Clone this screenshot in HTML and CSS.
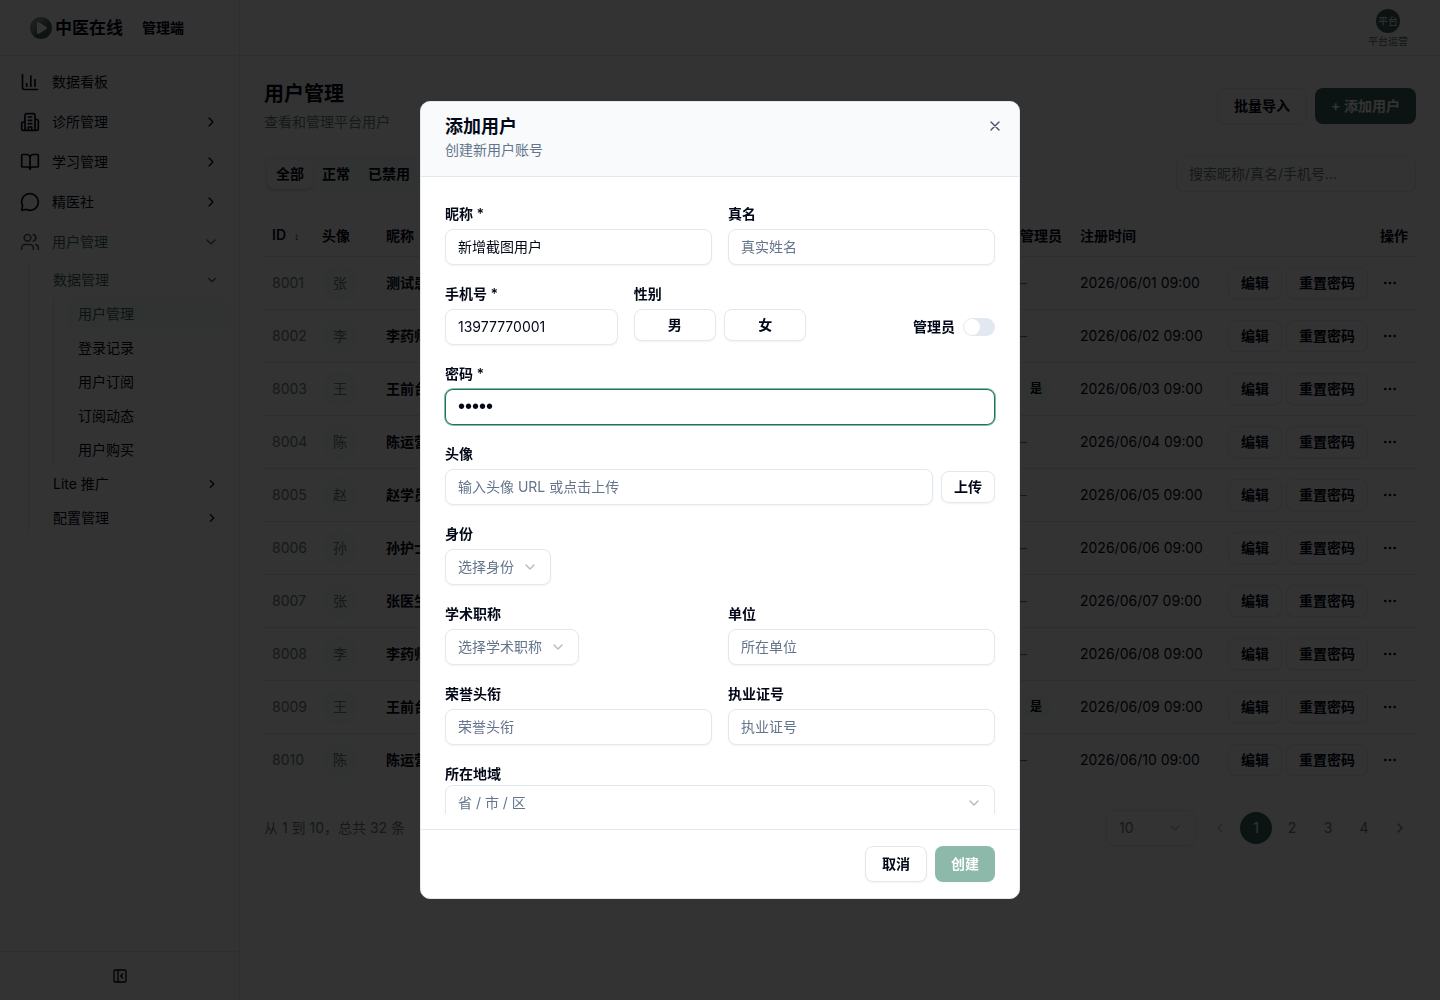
FILE: index.html
```html
<!DOCTYPE html>
<html lang="zh-CN">
<head>
    <meta charset="UTF-8">
    <meta name="viewport" content="width=device-width, initial-scale=1.0">
    <title>用户管理 - 中医在线</title>
    <link rel="stylesheet" href="styles.css">
</head>
<body>
    <div class="app">
        <aside class="sidebar">
            <div class="brand">
                <svg class="brand-logo" viewBox="0 0 24 24" width="24" height="24">
                    <defs>
                        <linearGradient id="logo" x1="0" y1="0" x2="1" y2="1">
                            <stop offset="0.3" stop-color="#8c9692"/>
                            <stop offset="0.6" stop-color="#41695f"/>
                        </linearGradient>
                    </defs>
                    <circle cx="12" cy="12" r="11" fill="url(#logo)"/>
                    <path d="M8 7.200c0-1 1-1.500 1.800-1l7.600 4.700c.8.500.8 1.600 0 2.100l-7.600 4.700c-.8.500-1.800 0-1.800-1z" fill="#fff"/>
                </svg>
                <span class="brand-name">中医在线</span>
                <span class="brand-sub">管理端</span>
            </div>
            <nav class="nav">
                <a class="nav-item" href="#">
                    <svg class="icon" viewBox="0 0 24 24"><path d="M3 3v16a2 2 0 0 0 2 2h16M18 17V9M13 17V5M8 17v-3"/></svg>
                    <span>数据看板</span>
                </a>
                <a class="nav-item" href="#">
                    <svg class="icon" viewBox="0 0 24 24"><path d="M6 22V4a2 2 0 0 1 2-2h8a2 2 0 0 1 2 2v18zM6 12H4a2 2 0 0 0-2 2v6a2 2 0 0 0 2 2h2M18 9h2a2 2 0 0 1 2 2v9a2 2 0 0 1-2 2h-2M10 6h4M10 10h4M10 14h4M10 22v-4h4v4"/></svg>
                    <span>诊所管理</span>
                    <svg class="arrow" viewBox="0 0 24 24"><path d="m9 18 6-6-6-6"/></svg>
                </a>
                <a class="nav-item" href="#">
                    <svg class="icon" viewBox="0 0 24 24"><path d="M12 7v14M3 18a1 1 0 0 1-1-1V4a1 1 0 0 1 1-1h5a4 4 0 0 1 4 4 4 4 0 0 1 4-4h5a1 1 0 0 1 1 1v13a1 1 0 0 1-1 1h-6a3 3 0 0 0-3 3 3 3 0 0 0-3-3z"/></svg>
                    <span>学习管理</span>
                    <svg class="arrow" viewBox="0 0 24 24"><path d="m9 18 6-6-6-6"/></svg>
                </a>
                <a class="nav-item" href="#">
                    <svg class="icon" viewBox="0 0 24 24"><path d="M2.992 16.342a2 2 0 0 1 .094 1.167l-1.065 3.290a1 1 0 0 0 1.236 1.168l3.413-.998a2 2 0 0 1 1.099.092 10 10 0 1 0-4.777-4.719"/></svg>
                    <span>精医社</span>
                    <svg class="arrow" viewBox="0 0 24 24"><path d="m9 18 6-6-6-6"/></svg>
                </a>
                <a class="nav-item green" href="#">
                    <svg class="icon" viewBox="0 0 24 24"><path d="M16 21v-2a4 4 0 0 0-4-4H6a4 4 0 0 0-4 4v2M16 3.128a4 4 0 0 1 0 7.744M22 21v-2a4 4 0 0 0-3-3.870"/><circle cx="9" cy="7" r="4"/></svg>
                    <span>用户管理</span>
                    <svg class="arrow" viewBox="0 0 24 24"><path d="m6 9 6 6 6-6"/></svg>
                </a>
                <div class="subnav">
                    <a class="sub-item green" href="#">数据管理 <svg class="arrow small" viewBox="0 0 24 24"><path d="m6 9 6 6 6-6"/></svg></a>
                    <div class="subnav level3">
                        <a class="sub-item active" href="#">用户管理</a>
                        <a class="sub-item" href="#">登录记录</a>
                        <a class="sub-item" href="#">用户订阅</a>
                        <a class="sub-item" href="#">订阅动态</a>
                        <a class="sub-item" href="#">用户购买</a>
                    </div>
                    <a class="sub-item" href="#">Lite 推广 <svg class="arrow small" viewBox="0 0 24 24"><path d="m9 18 6-6-6-6"/></svg></a>
                    <a class="sub-item" href="#">配置管理 <svg class="arrow small" viewBox="0 0 24 24"><path d="m9 18 6-6-6-6"/></svg></a>
                </div>
            </nav>
            <div class="sidebar-footer">
                <button class="icon-btn" aria-label="收起侧边栏">
                    <svg viewBox="0 0 24 24" width="16" height="16"><rect x="3" y="3" width="18" height="18" rx="2"/><path d="M9 3v18M16 15l-3-3 3-3"/></svg>
                </button>
            </div>
        </aside>

        <div class="main">
            <header class="topbar">
                <div class="account">
                    <span class="account-avatar">平台</span>
                    <span class="account-name">平台运营</span>
                </div>
            </header>
            <main class="content">
                <div class="page-head">
                    <div>
                        <h1>用户管理</h1>
                        <p>查看和管理平台用户</p>
                    </div>
                    <div class="head-actions">
                        <button class="btn">批量导入</button>
                        <button class="btn add">+ 添加用户</button>
                    </div>
                </div>
                <div class="filters">
                    <div class="tabs">
                        <button class="tab selected">全部</button>
                        <button class="tab">正常</button>
                        <button class="tab">已禁用</button>
                    </div>
                    <input class="input search" type="text" placeholder="搜索昵称/真名/手机号..." aria-label="搜索用户">
                </div>
                <table class="users">
                    <colgroup>
                        <col class="col-id">
                        <col class="col-avatar">
                        <col>
                        <col class="col-admin">
                        <col class="col-date">
                        <col class="col-actions">
                    </colgroup>
                    <thead>
                        <tr>
                            <th>ID<span class="sort">↕</span></th>
                            <th>头像</th>
                            <th>昵称</th>
                            <th>管理员</th>
                            <th>注册时间</th>
                            <th class="right">操作</th>
                        </tr>
                    </thead>
                    <tbody class="js-users"></tbody>
                </table>
                <div class="table-footer">
                    <span>从 1 到 10，总共 32 条</span>
                    <div class="pager">
                        <select class="select page-size" aria-label="每页条数"><option>10</option></select>
                        <button class="page-btn faded" aria-label="上一页"><svg viewBox="0 0 24 24" width="16" height="16"><path d="m15 18-6-6 6-6"/></svg></button>
                        <button class="page-btn current">1</button>
                        <button class="page-btn">2</button>
                        <button class="page-btn">3</button>
                        <button class="page-btn">4</button>
                        <button class="page-btn" aria-label="下一页"><svg viewBox="0 0 24 24" width="16" height="16"><path d="m9 18 6-6-6-6"/></svg></button>
                    </div>
                </div>
            </main>
        </div>
    </div>

    <div class="overlay">
        <form class="modal" role="dialog" aria-modal="true" aria-labelledby="modal-title">
            <div class="modal-head">
                <h2 id="modal-title">添加用户</h2>
                <p>创建新用户账号</p>
                <button type="button" class="icon-btn close" aria-label="关闭">
                    <svg viewBox="0 0 24 24" width="16" height="16"><path d="M18 6 6 18M6 6l12 12"/></svg>
                </button>
            </div>
            <div class="modal-body">
                <div class="row two">
                    <div class="field">
                        <label for="nickname">昵称 *</label>
                        <input class="input" id="nickname" type="text" value="新增截图用户">
                    </div>
                    <div class="field">
                        <label for="realname">真名</label>
                        <input class="input" id="realname" type="text" placeholder="真实姓名">
                    </div>
                </div>
                <div class="row three">
                    <div class="field">
                        <label for="phone">手机号 *</label>
                        <input class="input" id="phone" type="tel" value="13977770001">
                    </div>
                    <div class="field">
                        <span class="label" id="gender">性别</span>
                        <div class="gender" role="group" aria-labelledby="gender">
                            <button type="button" class="btn small">男</button>
                            <button type="button" class="btn small">女</button>
                        </div>
                    </div>
                    <div class="admin">
                        <label for="admin">管理员</label>
                        <input class="switch" id="admin" type="checkbox" role="switch">
                    </div>
                </div>
                <div class="field">
                    <label for="password">密码 *</label>
                    <input class="input password focused" id="password" type="password" value="12345">
                </div>
                <div class="field">
                    <label for="avatar">头像</label>
                    <div class="upload">
                        <input class="input" id="avatar" type="text" placeholder="输入头像 URL 或点击上传">
                        <button type="button" class="btn small">上传</button>
                    </div>
                </div>
                <div class="field">
                    <label for="identity">身份</label>
                    <select class="select" id="identity"><option>选择身份</option></select>
                </div>
                <div class="row two">
                    <div class="field">
                        <label for="academic">学术职称</label>
                        <select class="select" id="academic"><option>选择学术职称</option></select>
                    </div>
                    <div class="field">
                        <label for="company">单位</label>
                        <input class="input" id="company" type="text" placeholder="所在单位">
                    </div>
                </div>
                <div class="row two">
                    <div class="field">
                        <label for="honor">荣誉头衔</label>
                        <input class="input" id="honor" type="text" placeholder="荣誉头衔">
                    </div>
                    <div class="field">
                        <label for="license">执业证号</label>
                        <input class="input" id="license" type="text" placeholder="执业证号">
                    </div>
                </div>
                <div class="field tight">
                    <label for="region">所在地域</label>
                    <select class="select wide" id="region"><option>省 / 市 / 区</option></select>
                </div>
            </div>
            <div class="modal-foot">
                <button type="button" class="btn">取消</button>
                <button type="submit" class="btn primary" disabled>创建</button>
            </div>
        </form>
    </div>

    <script src="script.js"></script>
</body>
</html>
```
FILE: styles.css
```css
* {
    box-sizing: border-box;
}
body {
    margin: 0;
    font-family: Inter, "Noto Sans CJK SC", sans-serif;
    font-size: 14px;
    line-height: 20px;
    color: #020817;
    background-color: #fff;
}
h1, h2, p {
    margin: 0;
}
a {
    color: inherit;
    text-decoration: none;
}
button, input, select {
    font: inherit;
    color: inherit;
}
button {
    cursor: pointer;
}
svg {
    fill: none;
    stroke: currentColor;
    stroke-width: 2;
    stroke-linecap: round;
    stroke-linejoin: round;
}
.app {
    display: flex;
    min-height: 100vh;
}

/* sidebar */
.sidebar {
    display: flex;
    flex-direction: column;
    width: 240px;
    border-right: 1px solid #e0e6e4;
}
.brand {
    display: flex;
    align-items: center;
    height: 56px;
    padding-left: 29px;
    border-bottom: 1px solid #e0e6e4;
}
.brand-logo {
    stroke: none;
}
.brand-name {
    margin-left: 2px;
    font-size: 17px;
    font-weight: 600;
}
.brand-sub {
    margin-left: 19px;
    font-weight: 600;
}
.nav {
    display: flex;
    flex-direction: column;
    flex: 1;
    gap: 4px;
    padding: 8px;
}
.nav-item {
    display: flex;
    align-items: center;
    gap: 12px;
    height: 36px;
    padding: 0 12px;
    border-radius: 8px;
}
.icon {
    width: 20px;
    height: 20px;
}
.arrow {
    width: 16px;
    height: 16px;
    margin-left: auto;
}
.arrow.small {
    width: 14px;
    height: 14px;
}
.green {
    color: #41695f;
}
.subnav {
    display: flex;
    flex-direction: column;
    gap: 2px;
    margin-left: 20px;
    padding-left: 12px;
    border-left: 1px solid #e0e6e4;
}
.level3 {
    margin-left: 12px;
}
.sub-item {
    display: flex;
    align-items: center;
    height: 32px;
    padding: 0 12px;
    border-radius: 8px;
}
.sub-item.active {
    color: #41695f;
    background-color: #f4f8f7;
}
.sidebar-footer {
    display: flex;
    align-items: center;
    justify-content: center;
    height: 49px;
    border-top: 1px solid #e0e6e4;
}
.icon-btn {
    display: flex;
    padding: 0;
    border: none;
    background: none;
}

/* page */
.main {
    flex: 1;
    min-width: 0;
}
.topbar {
    display: flex;
    align-items: center;
    justify-content: flex-end;
    height: 56px;
    padding: 0 32px;
    border-bottom: 1px solid #e0e6e4;
}
.account {
    display: flex;
    flex-direction: column;
    align-items: center;
    gap: 2px;
    font-size: 10px;
    line-height: 12px;
}
.account-avatar {
    width: 24px;
    border-radius: 50%;
    line-height: 24px;
    text-align: center;
    color: #fff;
    background-color: #3a6459;
}
.account-name {
    color: #62716d;
}
.content {
    padding: 24px;
}
.page-head {
    display: flex;
    align-items: center;
    justify-content: space-between;
    margin-bottom: 24px;
}
h1 {
    font-size: 20px;
    font-weight: 600;
    line-height: 28px;
}
.page-head p {
    margin-top: 4px;
    color: #67807a;
}
.head-actions {
    display: flex;
    gap: 8px;
}
.btn {
    height: 36px;
    padding: 0 16px;
    border: 1px solid #e2e8f0;
    border-radius: 8px;
    font-weight: 600;
    white-space: nowrap;
    background-color: #fff;
    box-shadow: 0 1px 2px rgba(0, 0, 0, 0.05);
}
.btn.small {
    height: 32px;
    padding: 0 12px;
}
.btn.primary {
    border: none;
    color: #fff;
    background-color: #1b7555;
}
.btn.add {
    border: none;
    color: #fff;
    background-color: #3a6459;
}
.btn:disabled {
    opacity: 0.5;
}
.filters {
    display: flex;
    align-items: center;
    justify-content: space-between;
    margin-bottom: 24px;
}
.tabs {
    display: flex;
    padding: 3px;
    border-radius: 8px;
    background-color: #f4f8f7;
}
.tab {
    height: 30px;
    padding: 0 9px;
    border: none;
    border-radius: 8px;
    font-weight: 600;
    background: none;
}
.tab.selected {
    background-color: #fff;
    box-shadow: 0 1px 3px rgba(0, 0, 0, 0.15);
}
.input, .select {
    width: 100%;
    height: 36px;
    padding: 0 12px 2px;
    border: 1px solid #e2e8f0;
    border-radius: 8px;
    outline: none;
    background-color: #fff;
    box-shadow: 0 1px 2px rgba(0, 0, 0, 0.05);
}
.input::placeholder {
    color: #64748b;
}
.search {
    width: 240px;
}
.search::placeholder {
    color: #67807a;
}
.select {
    width: auto;
    padding: 0 36px 0 12px;
    appearance: none;
    color: #64748b;
    background-image: url("data:image/svg+xml,%3Csvg xmlns='http://www.w3.org/2000/svg' viewBox='0 0 24 24' fill='none' stroke='%23b1b9c5' stroke-width='2' stroke-linecap='round' stroke-linejoin='round'%3E%3Cpath d='m6 9 6 6 6-6'/%3E%3C/svg%3E");
    background-repeat: no-repeat;
    background-position: right 12px center;
    background-size: 16px;
}
.select.wide {
    width: 100%;
}

/* users table */
.users {
    width: 100%;
    table-layout: fixed;
    border-collapse: collapse;
}
.col-id {
    width: 50px;
}
.col-avatar {
    width: 64px;
}
.col-admin {
    width: 60px;
}
.col-date {
    width: 148px;
}
.col-actions {
    width: 196px;
}
.users th {
    height: 40px;
    padding: 0 8px;
    font-weight: 600;
    text-align: left;
    white-space: nowrap;
}
.users th.right {
    text-align: right;
}
.sort {
    margin-left: 8px;
    font-family: "Liberation Sans", sans-serif;
    font-size: 10px;
}
.users tr {
    border-bottom: 1px solid #e0e6e4;
}
.users tbody tr:last-child {
    border-bottom: none;
}
.users td {
    height: 53px;
    padding: 0 8px;
    white-space: nowrap;
}
.user-id, .dash {
    color: #67807a;
}
.user-avatar {
    display: block;
    width: 36px;
    border-radius: 50%;
    line-height: 36px;
    text-align: center;
    color: #67807a;
    background-color: #f4f8f7;
}
.users .nick {
    font-weight: 600;
}
.badge {
    display: inline-block;
    padding: 1px 10px;
    border-radius: 11px;
    font-size: 12px;
    font-weight: 600;
    background-color: #f4f8f7;
}
.actions {
    display: flex;
    gap: 4px;
}
.more {
    justify-content: center;
    align-items: center;
    width: 36px;
}
.table-footer {
    display: flex;
    align-items: center;
    justify-content: space-between;
    margin-top: 24px;
    color: #67807a;
}
.pager {
    display: flex;
    align-items: center;
    gap: 4px;
}
.page-size {
    width: 90px;
    margin-right: 4px;
    color: #67807a;
}
.page-btn {
    display: flex;
    align-items: center;
    justify-content: center;
    width: 32px;
    height: 32px;
    padding: 0;
    border: none;
    border-radius: 50%;
    background: none;
}
.page-btn.current {
    color: #fff;
    background-color: #3a6459;
}
.faded {
    opacity: 0.5;
}

/* dialog */
.overlay {
    position: fixed;
    inset: 0;
    display: flex;
    align-items: center;
    justify-content: center;
    background-color: rgba(0, 0, 0, 0.8);
}
.modal {
    display: flex;
    flex-direction: column;
    width: 600px;
    max-width: 100%;
    max-height: calc(100vh - 202px);
    border: 1px solid #e2e8f0;
    border-radius: 10px;
    overflow: hidden;
    background-color: #fff;
}
.modal-head {
    position: relative;
    padding: 12px 24px 16px;
    border-bottom: 1px solid #e2e8f0;
    background-color: #f8fafc;
}
.modal-head h2 {
    font-size: 18px;
    font-weight: 600;
    line-height: 26px;
}
.modal-head p {
    color: #64748b;
}
.close {
    position: absolute;
    top: 16px;
    right: 16px;
    color: #45505f;
}
.modal-body {
    display: flex;
    flex-direction: column;
    gap: 20px;
    margin-bottom: 15px;
    padding: 28px 24px;
    overflow-y: auto;
    scrollbar-width: none;
}
.row {
    display: grid;
    gap: 16px;
}
.two {
    grid-template-columns: repeat(2, 1fr);
}
.three {
    grid-template-columns: repeat(3, 1fr);
}
.field {
    display: flex;
    flex-direction: column;
    align-items: flex-start;
    gap: 6px;
}
.field.tight {
    gap: 2px;
}
label, .label {
    font-weight: 600;
    line-height: 18px;
}
.input.password {
    font-family: "Liberation Sans", sans-serif;
    font-size: 20px;
}
.input.focused {
    border-color: #1b7555;
    box-shadow: 0 0 0 1px rgba(27, 117, 85, 0.5);
}
.gender {
    display: grid;
    grid-template-columns: repeat(2, 1fr);
    gap: 8px;
    width: 100%;
}
.admin {
    display: flex;
    align-items: center;
    align-self: end;
    justify-content: flex-end;
    gap: 8px;
    height: 36px;
}
.switch {
    display: flex;
    width: 32px;
    height: 18px;
    margin: 0;
    padding: 1px;
    appearance: none;
    border-radius: 9px;
    background-color: #e2e8f0;
}
.switch::before {
    content: "";
    width: 16px;
    border-radius: 50%;
    background-color: #fff;
}
.upload {
    display: flex;
    align-items: center;
    gap: 8px;
    width: 100%;
}
.modal-foot {
    display: flex;
    justify-content: flex-end;
    gap: 8px;
    padding: 16px 24px;
    border-top: 1px solid #e2e8f0;
}
```
FILE: script.js
```js
const users = [
    { id: 8001, name: '测试患者' },
    { id: 8002, name: '李药师' },
    { id: 8003, name: '王前台', admin: true },
    { id: 8004, name: '陈运营' },
    { id: 8005, name: '赵学员' },
    { id: 8006, name: '孙护士' },
    { id: 8007, name: '张医生' },
    { id: 8008, name: '李药师' },
    { id: 8009, name: '王前台', admin: true },
    { id: 8010, name: '陈运营' }
];

let rows = '';
users.forEach((user, index) => {
    const day = String(index + 1).padStart(2, '0');
    const initial = index === 0 ? '张' : user.name[0];
    rows += `
    <tr>
        <td class="user-id">${user.id}</td>
        <td><span class="user-avatar">${initial}</span></td>
        <td class="nick">${user.name}</td>
        <td>${user.admin ? '<span class="badge">是</span>' : '<span class="dash">–</span>'}</td>
        <td>2026/06/${day} 09:00</td>
        <td>
            <div class="actions">
                <button class="btn small">编辑</button>
                <button class="btn small">重置密码</button>
                <button class="icon-btn more" aria-label="更多操作">
                    <svg viewBox="0 0 24 24" width="16" height="16"><circle cx="12" cy="12" r="1"/><circle cx="19" cy="12" r="1"/><circle cx="5" cy="12" r="1"/></svg>
                </button>
            </div>
        </td>
    </tr>`;
});
document.querySelector('.js-users').innerHTML = rows;
```
